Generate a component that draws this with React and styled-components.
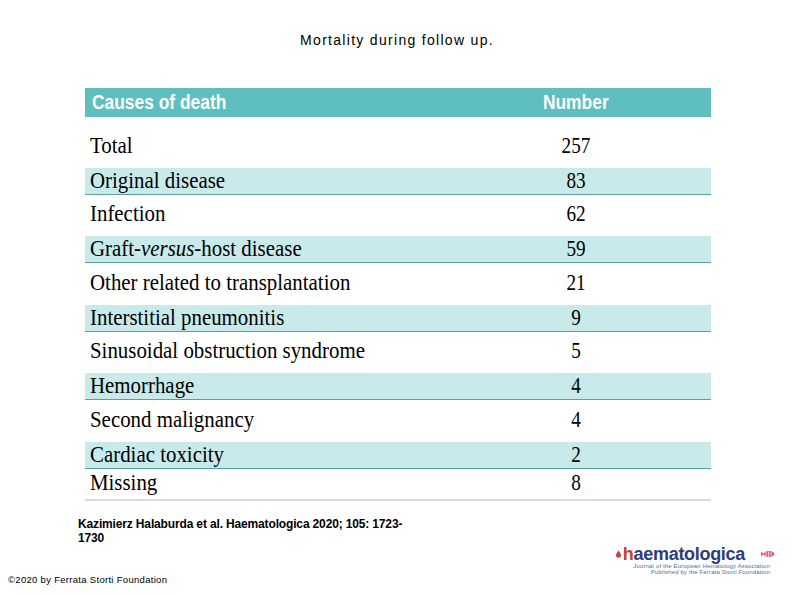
import React from 'react';
import styled, { createGlobalStyle } from 'styled-components';

const GlobalStyle = createGlobalStyle`
  html, body {
    margin: 0;
    padding: 0;
    background: #fff;
  }
`;

const Page = styled.div`
  width: 794px;
  height: 595px;
  display: flex;
  flex-direction: column;
  overflow: hidden;
  font-family: "Liberation Sans", Arial, sans-serif;
  color: #000;
`;

const Title = styled.h1`
  margin: 32px 0 0;
  font-size: 14px;
  line-height: 16px;
  font-weight: 400;
  letter-spacing: 1.3px;
  text-align: center;
`;

const Table = styled.div`
  margin: 40px 0 0 85px;
  width: 626px;
  display: flex;
  flex-direction: column;
`;

// the source table is set in a condensed face, so glyphs are narrowed
const Narrow = styled.span`
  display: inline-block;
  transform: scaleX(${p => p.$sx});
  transform-origin: ${p => (p.$num ? 'center' : 'left')} center;
`;

const HeaderRow = styled.div`
  display: grid;
  grid-template-columns: 1fr 270px;
  align-items: center;
  height: 29px;
  background: #5ebfbe;
  color: #fff;
  font-weight: 700;
  font-size: 20px;
  line-height: 1;
  margin-bottom: 9px;
`;

const HeadCell = styled.div`
  padding-left: ${p => (p.$num ? 0 : 7)}px;
  padding-bottom: 1px;
  text-align: ${p => (p.$num ? 'center' : 'left')};
`;

const Row = styled.div`
  display: grid;
  grid-template-columns: 1fr 270px;
  align-items: center;
  height: ${p => (p.$shaded ? 26 : p.$last ? 30 : 41.5)}px;
  background: ${p => (p.$shaded ? '#c8eaea' : '#fff')};
  border-bottom: ${p =>
    p.$shaded ? '1px solid #5a9e9e' : p.$last ? '2px solid #dcdcdc' : 'none'};
  font-family: "Liberation Serif", "Times New Roman", serif;
  font-size: 24px;
  line-height: 1;
`;

const Cell = styled.div`
  padding-left: ${p => (p.$num ? 0 : 5)}px;
  padding-bottom: 4px;
  text-align: ${p => (p.$num ? 'center' : 'left')};
  white-space: nowrap;
`;

const Footer = styled.div`
  flex: 1;
  display: flex;
  justify-content: space-between;
`;

const Credits = styled.div`
  display: flex;
  flex-direction: column;
`;

const Citation = styled.p`
  margin: 16px 0 0 78px;
  font-size: 12px;
  line-height: 14px;
  font-weight: 700;
  letter-spacing: -0.15px;
`;

const Copyright = styled.p`
  margin: 29px 0 0 8px;
  font-size: 9.5px;
  line-height: 12px;
  letter-spacing: 0.3px;
`;

const Logo = styled.div`
  margin: 44px 18px 0 0;
  display: flex;
  flex-direction: column;
  align-items: flex-start;
`;

const LogoTop = styled.div`
  display: flex;
  align-items: center;
  gap: 1px;
`;

const Wordmark = styled.span`
  font-size: 18px;
  line-height: 18px;
  font-weight: 700;
  color: #2d3c7c;
  letter-spacing: -0.3px;

  b {
    color: #c4423a;
  }
`;

const Emblem = styled.svg`
  margin-left: 14px;
`;

const Tagline = styled.div`
  align-self: stretch;
  padding-right: 6px;
  font-size: 6px;
  line-height: 6.5px;
  color: #5c6a8a;
  text-align: right;
  letter-spacing: 0.15px;
`;

const rows = [
  ['Total', '257'],
  ['Original disease', '83'],
  ['Infection', '62'],
  [<>Graft-<i>versus</i>-host disease</>, '59'],
  ['Other related to transplantation', '21'],
  ['Interstitial pneumonitis', '9'],
  ['Sinusoidal obstruction syndrome', '5'],
  ['Hemorrhage', '4'],
  ['Second malignancy', '4'],
  ['Cardiac toxicity', '2'],
  ['Missing', '8'],
];

const App = () => (
  <>
    <GlobalStyle />
    <Page>
      <Title>Mortality during follow up.</Title>

      <Table>
        <HeaderRow>
          <HeadCell>
            <Narrow $sx={0.87}>Causes of death</Narrow>
          </HeadCell>
          <HeadCell $num>
            <Narrow $sx={0.87} $num>Number</Narrow>
          </HeadCell>
        </HeaderRow>
        {rows.map(([cause, n], i) => (
          <Row key={i} $shaded={i % 2 === 1} $last={i === rows.length - 1}>
            <Cell>
              <Narrow $sx={0.87}>{cause}</Narrow>
            </Cell>
            <Cell $num>
              <Narrow $sx={0.8} $num>{n}</Narrow>
            </Cell>
          </Row>
        ))}
      </Table>

      <Footer>
        <Credits>
          <Citation>
            Kazimierz Halaburda et al. Haematologica 2020; 105: 1723-
            <br />
            1730
          </Citation>
          <Copyright>©2020 by Ferrata Storti Foundation</Copyright>
        </Credits>

        <Logo>
          <LogoTop>
            <svg width="7" height="8" viewBox="0 0 7 8">
              <path d="M3.5 0.5 C2 3 1 4 1 5.2 A2.5 2.5 0 0 0 6 5.2 C6 4 5 3 3.5 0.5 Z" fill="#c4423a" />
            </svg>
            <Wordmark>
              <b>h</b>aematologica
            </Wordmark>
            <Emblem width="16" height="8" viewBox="0 0 16 8">
              <ellipse cx="9" cy="4" rx="5.5" ry="3" fill="#d9607a" />
              <path d="M1 1.5 L4 4 L1 6.5 Z" fill="#d9607a" />
              <path d="M6 2 V6 M8.5 1.5 V6.5 M11 2 V6" stroke="#fff" strokeWidth="0.7" />
            </Emblem>
          </LogoTop>
          <Tagline>
            Journal of the European Hematology Association
            <br />
            Published by the Ferrata Storti Foundation
          </Tagline>
        </Logo>
      </Footer>
    </Page>
  </>
);

export default App;
